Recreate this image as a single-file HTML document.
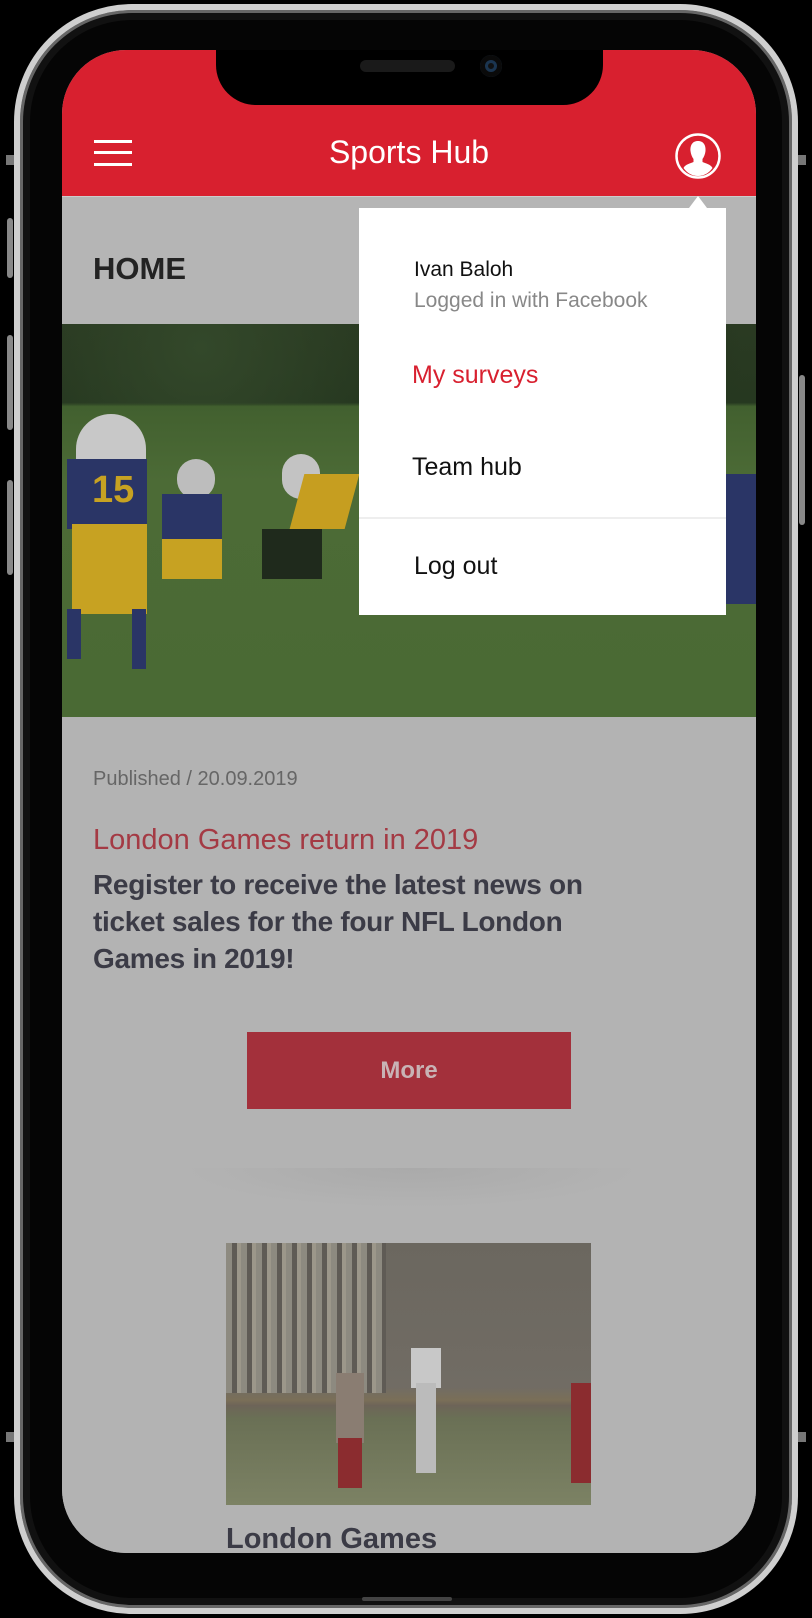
<!DOCTYPE html>
<html><head><meta charset="utf-8"><style>
*{margin:0;padding:0;box-sizing:border-box}
body{width:812px;height:1618px;background:#000;position:relative;overflow:hidden;font-family:"Liberation Sans",sans-serif}
.abs{position:absolute}
.frame{left:14px;top:4px;width:784px;height:1610px;border-radius:118px;border:6px solid #cfcfcf;background:#050505;box-shadow:inset 0 0 0 3px #666,inset 0 0 0 10px #111}
.screen{left:62px;top:50px;width:694px;height:1503px;border-radius:64px;overflow:hidden;background:#b3b3b3}
.hdr{left:0;top:0;width:694px;height:146px;background:#d8202f}
.notch{left:154px;top:-10px;width:387px;height:65px;background:#000;border-radius:0 0 40px 40px}
.t{white-space:nowrap}
</style></head><body>
<div class="abs" style="left:6px;top:155px;width:10px;height:10px;background:#777"></div>
<div class="abs" style="left:796px;top:155px;width:10px;height:10px;background:#777"></div>
<div class="abs" style="left:6px;top:1432px;width:10px;height:10px;background:#777"></div>
<div class="abs" style="left:796px;top:1432px;width:10px;height:10px;background:#777"></div>
<div class="abs" style="left:7px;top:218px;width:6px;height:60px;background:#888;border-radius:3px"></div>
<div class="abs" style="left:7px;top:335px;width:6px;height:95px;background:#888;border-radius:3px"></div>
<div class="abs" style="left:7px;top:480px;width:6px;height:95px;background:#888;border-radius:3px"></div>
<div class="abs" style="left:799px;top:375px;width:6px;height:150px;background:#888;border-radius:3px"></div>
<div class="abs frame"></div>
<div class="abs screen">
  <div class="abs hdr"></div>
  <div class="abs notch"></div>
  <div class="abs" style="left:298px;top:10px;width:95px;height:12px;border-radius:6px;background:#1a1a1a"></div>
  <div class="abs" style="left:418px;top:5px;width:22px;height:22px;border-radius:50%;background:#111;box-shadow:inset 0 0 0 5px #0a0a0a,inset 0 0 0 8px #1b3550"></div>
  <div class="abs" style="left:32px;top:90px;width:38px;height:3px;background:#fff"></div>
  <div class="abs" style="left:32px;top:101px;width:38px;height:3px;background:#fff"></div>
  <div class="abs" style="left:32px;top:113px;width:38px;height:3px;background:#fff"></div>
  <div class="abs t" style="left:0;width:694px;text-align:center;top:84px;color:#fff;font-size:32px">Sports Hub</div>
  <svg class="abs" style="left:612px;top:82px" width="48" height="48" viewBox="0 0 48 48"><circle cx="24" cy="24" r="21.5" fill="none" stroke="#fff" stroke-width="2.5"/><path d="M24 9c-6 0-8 5-7.5 10 .3 3 1.5 6 3 8v3c-3 1.5-8 2-10 6 3.5 5 8.5 8 14.5 8s11-3 14.5-8c-2-4-7-4.5-10-6v-3c1.5-2 2.7-5 3-8 .5-5-1.5-10-7.5-10z" fill="#fff"/></svg>
  <div class="abs" style="left:0;top:146px;width:694px;height:128px;background:#b5b5b5;border-top:1px solid #ccc"></div>
  <div class="abs t" style="left:31px;top:201px;font-size:31px;font-weight:bold;color:#232323">HOME</div>
  <div class="abs" style="left:0;top:274px;width:694px;height:393px;overflow:hidden;background:linear-gradient(#2a3a22 0,#263820 20%,#42602f 21%,#4c6b36 40%,#4a6a34 100%)">
    <div class="abs" style="left:0;top:0;width:694px;height:80px;background:radial-gradient(circle at 20% 30%,#33482a,transparent 30%),radial-gradient(circle at 70% 50%,#1f2d1a,transparent 40%)"></div>
    <div class="abs" style="left:14px;top:90px;width:70px;height:60px;border-radius:35px 35px 10px 10px;background:#c8c8c8"></div>
    <div class="abs" style="left:5px;top:135px;width:80px;height:70px;background:#2a3566"></div>
    <div class="abs" style="left:10px;top:200px;width:75px;height:90px;background:#c7a222"></div>
    <div class="abs" style="left:5px;top:285px;width:14px;height:50px;background:#2a3566"></div>
    <div class="abs" style="left:70px;top:285px;width:14px;height:60px;background:#2a3566"></div>
    <div class="abs" style="left:30px;top:145px;font:bold 38px 'Liberation Sans';color:#c7a222">15</div>
    <div class="abs" style="left:115px;top:135px;width:38px;height:40px;border-radius:20px;background:#bdbdbd"></div>
    <div class="abs" style="left:100px;top:170px;width:60px;height:50px;background:#2a3566"></div>
    <div class="abs" style="left:100px;top:215px;width:60px;height:40px;background:#c7a222"></div>
    <div class="abs" style="left:220px;top:130px;width:38px;height:45px;border-radius:20px;background:#c3c3c3"></div>
    <div class="abs" style="left:235px;top:150px;width:55px;height:55px;background:#c69e20;transform:skewX(-15deg)"></div>
    <div class="abs" style="left:200px;top:205px;width:60px;height:50px;background:#1f2a1c"></div>
    <div class="abs" style="left:660px;top:150px;width:34px;height:130px;background:#2a3566"></div>
  </div>
  <div class="abs t" style="left:31px;top:718px;font-size:20px;color:#666">Published / 20.09.2019</div>
  <div class="abs t" style="left:31px;top:774px;font-size:29px;color:#a43a44">London Games return in 2019</div>
  <div class="abs t" style="left:31px;top:816px;font-size:28px;font-weight:bold;line-height:37px;color:#3b3b46;letter-spacing:-0.3px">Register to receive the latest news on<br>ticket sales for the four NFL London<br>Games in 2019!</div>
  <div class="abs" style="left:185px;top:982px;width:324px;height:77px;background:#a3303b;color:#c8b3b5;font-size:24px;font-weight:bold;text-align:center;line-height:77px">More</div>
  <div class="abs" style="left:0;top:1118px;width:694px;height:400px;background:#b3b3b3"></div>
  <div class="abs" style="left:120px;top:1118px;width:460px;height:40px;background:radial-gradient(ellipse at 50% 0,#aaa,transparent 70%)"></div>
  <div class="abs" style="left:164px;top:1193px;width:365px;height:262px;overflow:hidden;background:linear-gradient(#6b675f 0,#716c64 55%,#7a6f58 60%,#6d6458 62%,#6a7055 67%,#7c8264 100%)">
    <div class="abs" style="left:0;top:0;width:160px;height:150px;background:repeating-linear-gradient(90deg,#8d8a80 0 6px,#5f5b55 6px 11px,#9c978a 11px 15px)"></div>
    <div class="abs" style="left:185px;top:105px;width:30px;height:40px;background:#c8c8c8"></div>
    <div class="abs" style="left:190px;top:140px;width:20px;height:90px;background:#bbb"></div>
    <div class="abs" style="left:110px;top:130px;width:28px;height:70px;background:#8a7d72"></div>
    <div class="abs" style="left:112px;top:195px;width:24px;height:50px;background:#8b2c2f"></div>
    <div class="abs" style="left:345px;top:140px;width:20px;height:100px;background:#8b2c2f"></div>
  </div>
  <div class="abs t" style="left:164px;top:1473px;font-size:29px;font-weight:bold;color:#3b3b46">London Games</div>
  <div class="abs" style="left:627px;top:146px;width:0;height:0;border-left:9px solid transparent;border-right:9px solid transparent;border-bottom:12px solid #fff"></div>
  <div class="abs" style="left:297px;top:158px;width:367px;height:407px;background:#fff">
    <div class="abs t" style="left:55px;top:50px;font-size:21px;color:#111">Ivan Baloh</div>
    <div class="abs t" style="left:55px;top:81px;font-size:21px;color:#888">Logged in with Facebook</div>
    <div class="abs t" style="left:53px;top:153px;font-size:25px;color:#d8202f">My surveys</div>
    <div class="abs t" style="left:53px;top:245px;font-size:25px;color:#111">Team hub</div>
    <div class="abs" style="left:0;top:309px;width:367px;height:2px;background:#eee"></div>
    <div class="abs t" style="left:55px;top:344px;font-size:25px;color:#111">Log out</div>
  </div>
</div>
<div class="abs" style="left:362px;top:1597px;width:90px;height:4px;background:#444;border-radius:2px"></div>
</body></html>
